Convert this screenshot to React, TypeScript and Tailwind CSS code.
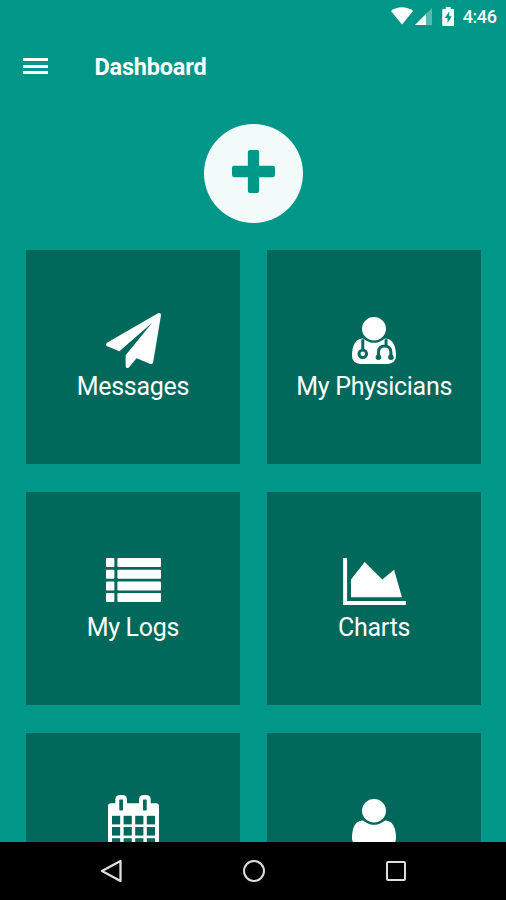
import type { ReactNode } from "react";

const USER_BODY =
  "M1408 1277q0 120-73 189.5t-194 69.5h-874q-121 0-194-69.5t-73-189.5q0-53 3.5-103.5t14-109 26.5-108.5 43-97.5 62-81 85.5-53.5 111.5-20q9 0 42 21.5t74.5 48 108 48 133.5 21.5 133.5-21.5 108-48 74.5-48 42-21.5q61 0 111.5 20t85.5 53.5 62 81 43 97.5 26.5 108.5 14 109 3.5 103.5zm-320-893q0 159-112.5 271.5t-271.5 112.5-271.5-112.5-112.5-271.5 112.5-271.5 271.5-112.5 271.5 112.5 112.5 271.5z";

function PlaneIcon() {
  return (
    <svg className="size-[55px]" viewBox="0 0 1792 1792" fill="currentColor">
      <path d="M1764 11q33 24 27 64l-256 1536q-5 29-32 45-14 8-31 8-11 0-24-5l-453-185-242 295q-18 23-49 23-13 0-22-4-19-7-30.5-23.5t-11.5-36.5v-349l864-1059-1069 925-395-162q-37-14-40-55-2-40 32-59l1664-960q15-9 32-9 20 0 36 11z" />
    </svg>
  );
}

function PhysicianIcon() {
  return (
    <svg className="h-[47px] w-[44px]" viewBox="0 0 1408 1536" preserveAspectRatio="none" fill="currentColor">
      <path d={USER_BODY} />
      <g fill="none" stroke="#00695c" strokeWidth="95">
        <path d="M345 730V1090" />
        <circle cx="345" cy="1205" r="122" />
        <path d="M1090 730V960M845 1310V1150C845 1020 930 950 1045 950S1245 1020 1245 1150V1310" />
      </g>
      <g fill="#00695c">
        <circle cx="845" cy="1315" r="88" />
        <circle cx="1245" cy="1315" r="88" />
      </g>
    </svg>
  );
}

function ListIcon() {
  return (
    <svg className="h-[44px] w-[55px]" viewBox="0 0 55 44" fill="currentColor">
      {[0, 11.7, 23.4, 35].map((y) => (
        <g key={y}>
          <rect x="0" y={y} width="8.4" height="9" rx="1" />
          <rect x="11.4" y={y} width="43.6" height="9" rx="1" />
        </g>
      ))}
    </svg>
  );
}

function ChartIcon() {
  return (
    <svg className="h-[47px] w-[63px]" viewBox="0 0 2048 1536" fill="currentColor">
      <path d="M2048 1408v128h-2048v-1536h128v1408h1920zm-384-1024l256 896h-1664v-576l448-576 576 576z" />
    </svg>
  );
}

function CalendarIcon() {
  return (
    <svg className="h-[55px] w-[51px]" viewBox="0 0 51 55">
      <rect x="0" y="8.300" width="51" height="46.700" rx="3" fill="currentColor" />
      <rect x="7.300" y="0" width="11.700" height="18" rx="4.500" fill="currentColor" />
      <rect x="31" y="0" width="11.700" height="18" rx="4.500" fill="currentColor" />
      <g fill="#00695c">
        <rect x="11.300" y="4.500" width="3.700" height="11" rx="0.800" />
        <rect x="35" y="4.500" width="3.700" height="11" rx="0.800" />
        {[20.8, 32, 43.2].map((y) =>
          [4, 15.6, 27.2, 38.8].map((x) => <rect key={`${x}-${y}`} x={x} y={y} width="8.2" height="8.6" />)
        )}
      </g>
    </svg>
  );
}

function UserIcon() {
  return (
    <svg className="h-[47px] w-[44px]" viewBox="0 0 1408 1536" preserveAspectRatio="none" fill="currentColor">
      <path d={USER_BODY} />
    </svg>
  );
}

function Tile({ label, iconPad, children }: { label?: string; iconPad: string; children: ReactNode }) {
  return (
    <button className="flex flex-col items-center bg-[#00695c] pt-[62.5px] text-white">
      <span className={`flex h-[59px] items-start ${iconPad}`}>{children}</span>
      {label && (
        <span className="text-[25px] leading-[30px] tracking-[-0.3px] whitespace-nowrap">{label}</span>
      )}
    </button>
  );
}

function StatusBar() {
  return (
    <div className="flex h-8 shrink-0 items-center justify-end pr-[9.5px] text-white">
      <svg className="h-[18px] w-[22px]" viewBox="0 0 22 18" fill="currentColor">
        <path d="M0 4C6-1 16-1 22 4L11 17.500Z" />
      </svg>
      <svg className="ml-[2px] h-[17px] w-[17px]" viewBox="0 0 17 17" fill="currentColor">
        <path d="M0 17L17 0V17Z" opacity=".35" />
        <path d="M0 17L11 6V17Z" />
      </svg>
      <svg className="ml-[10px] h-[19px] w-[12.5px]" viewBox="0 0 12 19">
        <path fill="currentColor" d="M1 2H3.500V0H8.500V2H11Q12 2 12 3V18Q12 19 11 19H1Q0 19 0 18V3Q0 2 1 2Z" />
        <path fill="#009688" d="M7 4.500L2.500 11H5.300V16L9.500 9.300H7Z" />
      </svg>
      <span className="ml-[8.500px] pt-[1px] text-[18px] leading-6 font-medium tracking-[-0.4px]">4:46</span>
    </div>
  );
}

export default function App() {
  return (
    <div className="flex h-[900px] w-[506px] flex-col overflow-hidden bg-[#009688] font-[Roboto,sans-serif]">
      <StatusBar />
      <header className="flex h-[68px] shrink-0 items-center pl-[22.5px] text-white">
        <button className="flex w-[25px] flex-col gap-[3.700px]" aria-label="Menu">
          <span className="h-[3px] w-full bg-white" />
          <span className="h-[3px] w-full bg-white" />
          <span className="h-[3px] w-full bg-white" />
        </button>
        <h1 className="ml-[47px] pt-[2px] text-[23.5px] leading-7 font-bold tracking-[-0.2px]">Dashboard</h1>
      </header>
      <main className="flex min-h-0 flex-1 flex-col items-center overflow-hidden pt-[24px] pl-[1px]">
        <button className="flex size-[99px] shrink-0 justify-center rounded-full bg-[#f3fbfa] pt-[26px]" aria-label="Add">
          <svg className="size-[43px]" viewBox="0 0 42 42" fill="#009688">
            <rect x="0" y="15.500" width="42" height="11" rx="2" />
            <rect x="15.500" y="0" width="11" height="42" rx="2" />
          </svg>
        </button>
        <div className="mt-[27.25px] grid shrink-0 grid-cols-[213.75px_213.75px] auto-rows-[213.75px] gap-[27.5px]">
          <Tile label="Messages" iconPad="pt-[0.5px] pl-[1.5px]"><PlaneIcon /></Tile>
          <Tile label="My Physicians" iconPad="pt-[4.5px]"><PhysicianIcon /></Tile>
          <Tile label="My Logs" iconPad="pt-[4px] pl-[1.5px]"><ListIcon /></Tile>
          <Tile label="Charts" iconPad="pt-[4px]"><ChartIcon /></Tile>
          <Tile iconPad="pt-0 pl-[1.5px]"><CalendarIcon /></Tile>
          <Tile iconPad="pt-[4px]"><UserIcon /></Tile>
        </div>
      </main>
      <nav className="flex h-[58px] shrink-0 items-center justify-between bg-black px-[100px] text-[#dedede]">
        <svg className="h-6 w-[22px]" viewBox="0 0 22 24" fill="none" stroke="currentColor" strokeWidth="2.300" strokeLinejoin="round">
          <path d="M2 12L20.500 2V22Z" />
        </svg>
        <span className="size-[22px] rounded-full border-2 border-current" />
        <span className="size-[20.5px] rounded-xs border-2 border-current" />
      </nav>
    </div>
  );
}
